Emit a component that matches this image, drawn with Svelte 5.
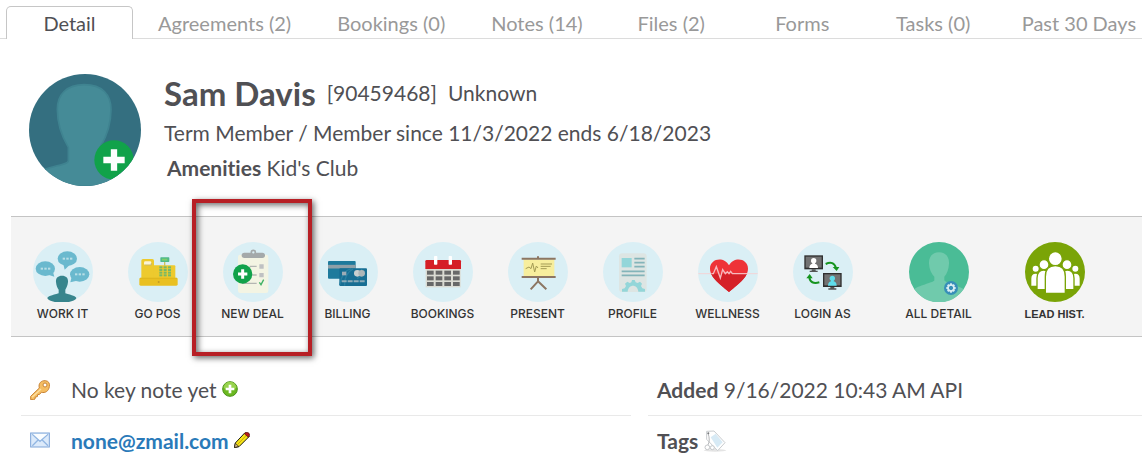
<script lang="ts">
	type Tab = { label: string; count?: number };

	const tabs: Tab[] = [
		{ label: 'Detail' },
		{ label: 'Agreements', count: 2 },
		{ label: 'Bookings', count: 0 },
		{ label: 'Notes', count: 14 },
		{ label: 'Files', count: 2 },
		{ label: 'Forms' },
		{ label: 'Tasks', count: 0 },
		{ label: 'Past 30 Days' }
	];

	let activeTab = $state('Detail');
	const cols = [0, 1, 2, 3];
	const rows = [0, 1, 2];
	const teeth = [0, 45, 90, 135, 180, 225, 270, 315];

	const actions = [
		{ label: 'WORK IT', icon: workIt },
		{ label: 'GO POS', icon: goPos },
		{ label: 'NEW DEAL', icon: newDeal, highlight: true },
		{ label: 'BILLING', icon: billing },
		{ label: 'BOOKINGS', icon: bookings },
		{ label: 'PRESENT', icon: present },
		{ label: 'PROFILE', icon: profile },
		{ label: 'WELLNESS', icon: wellness },
		{ label: 'LOGIN AS', icon: loginAs },
		{ label: 'ALL DETAIL', icon: allDetail, spaced: true, fill: '#4abc96' },
		{ label: 'LEAD HIST.', icon: leadHist, spaced: true, fill: '#7aa407', plain: true }
	];
</script>

{#snippet bubble(x: number, y: number, tail: string)}
	<g fill="#6ab9ce">
		<ellipse cx={x} cy={y} rx="29" ry="22" />
		<path d={tail} />
	</g>
	<g fill="#b9dfe6">
		<rect x={x - 14} y={y - 3} width="7" height="6" />
		<rect x={x - 3} y={y - 3} width="7" height="6" />
		<rect x={x + 8} y={y - 3} width="7" height="6" />
	</g>
{/snippet}

{#snippet workIt()}
	{@render bubble(37, 80, 'M46 98l18 6-5-18z')}
	{@render bubble(103, 50, 'M91 66l4 17 14-13z')}
	{@render bubble(140, 97, 'M116 104l-4 17 20-5z')}
	<path
		fill="#37858d"
		d="M87 101c13 0 19 8 18 19-1 11-5 18-8 23v11c20 5 33 10 33 15-8 17-79 17-87 0 0-5 14-10 34-15v-11c-4-5-7-12-8-23-1-11 5-19 18-19z"
	/>
{/snippet}

{#snippet goPos()}
	<rect x="40" y="51" width="38" height="60" rx="5" fill="#edca2e" />
	<rect x="76" y="70" width="66" height="40" rx="3" fill="#edca2e" />
	<rect x="48" y="58" width="22" height="11" rx="4" fill="#fbf4d4" />
	<path d="M50 69h20v-6" fill="none" stroke="#c9b868" stroke-width="3" />
	<path d="M110 60v12" stroke="#cfc25b" stroke-width="4" />
	<rect x="97" y="46" width="27" height="14" rx="2" fill="#4fb98a" />
	<rect x="102" y="50" width="16" height="6" fill="#7dcf6b" />
	{#each rows as c}
		{#each cols as r}
			<rect x={94 + c * 13} y={73 + r * 8} width="9" height="6" fill="#77b868" />
		{/each}
	{/each}
	<rect x="34" y="107" width="115" height="24" rx="4" fill="#e9c021" />
	<path d="M36 109h111" stroke="#d9b11c" stroke-width="2" />
	<circle cx="92" cy="120" r="3" fill="#c19b24" />
{/snippet}

{#snippet newDeal()}
	<rect x="45" y="38" width="91" height="115" rx="7" fill="#f3f4e3" />
	<rect x="56" y="32" width="70" height="16" rx="8" fill="#a4a9aa" />
	<circle cx="91" cy="31" r="6" fill="#daeff5" stroke="#a4a9aa" stroke-width="5" />
	<path d="M80 73h21M80 99h21M58 124h43" stroke="#b4b6b3" stroke-width="4" />
	<path d="M109 67h13v13h-13zM109 93h13v13h-13z" fill="#bfc1c2" />
	<path d="M109 121l5 7 8-15" fill="none" stroke="#40b265" stroke-width="4" />
	<circle cx="59" cy="96" r="29" fill="#11a24a" />
	<path d="M59 82v28M45 96h28" stroke="#fff" stroke-width="9" />
{/snippet}

{#snippet billing()}
	<rect x="30" y="57" width="83" height="53" rx="3" fill="#1e7a9c" />
	<path d="M30 74h83" stroke="#8fa0a8" stroke-width="11" />
	<rect x="64" y="79" width="83" height="53" rx="3" fill="#176e93" />
	<path d="M65 129c5-28 18-45 34-49M80 131c-2-22 8-42 25-50M117 109c10-2 14-12 14-28" fill="none" stroke="#2981a2" stroke-width="4" />
	<rect x="72" y="89" width="13" height="11" fill="#9cacb6" />
	<circle cx="118" cy="94" r="10" fill="#c9cfcf" />
	<circle cx="131" cy="94" r="10" fill="#adb6b8" />
	<path d="M71 118h70" stroke="#8dabb8" stroke-width="6" stroke-dasharray="15 3" />
{/snippet}

{#snippet bookings()}
	<rect x="38" y="78" width="105" height="58" fill="#dbdbd3" />
	<path d="M37 81V58q0-4 4-4h99q4 0 4 4v23z" fill="#d51f26" />
	<rect x="63" y="42" width="10" height="26" rx="2" fill="#fff" />
	<rect x="107" y="42" width="10" height="26" rx="2" fill="#fff" />
	{#each cols as c}
		{#each rows as r}
			<rect x={42 + c * 26} y={86 + r * 17} width="20" height="12" fill="#686868" />
		{/each}
	{/each}
{/snippet}

{#snippet present()}
	<rect x="47" y="52" width="92" height="50" fill="#f7ee9d" />
	<path d="M41 50h102M41 105h102" stroke="#8c7663" stroke-width="6" />
	<path d="M90 43v6M90 106v14M90 118l-22 24M90 118l25 24" stroke="#8c7663" stroke-width="6" fill="none" />
	<path d="M53 80l10-5 6 5 5-17 6 27 5-18 5 6" fill="none" stroke="#a39b54" stroke-width="3" />
	<path d="M98 66h34M98 73h30M98 80h18" stroke="#a39b54" stroke-width="3" />
{/snippet}

{#snippet profile()}
	<rect x="48" y="34" width="83" height="116" rx="9" fill="#dde5e3" />
	<rect x="56" y="48" width="30" height="28" fill="#93d6d9" />
	<path d="M94 50h31M94 62h31M94 74h31M56 88h69M56 100h69" stroke="#83b4b9" stroke-width="5" />
	<path
		d="M57 149v-8l8-2 4-7-3-7 7-6 7 4 5-2 2-7h8l3 7 6 2 7-4 6 6-3 7 4 7 8 2v8h-20c-2-24-30-24-32 0z"
		fill="#93d6d9"
	/>
{/snippet}

{#snippet wellness()}
	<path d="M1 95h178" stroke="#f4d3d6" stroke-width="3" />
	<path d="M93 150C75 133 36 108 36 80c0-31 42-38 57-10 15-28 57-21 57 10 0 28-39 53-57 70z" fill="#ee3338" />
	<path d="M39 95c10 22 38 40 54 55 16-15 44-33 54-55z" fill="#d52128" />
	<path d="M40 95h6l9-21 12 34 7-25 8 12 6-6 5 6 5-7 5 7h44" fill="none" stroke="#f6b9bd" stroke-width="4" />
{/snippet}

{#snippet monitor(x: number, y: number, fill: string)}
	<rect {x} {y} width="56" height="42" fill="#2f2f2f" />
	<rect x={x + 4} y={y + 4} width="48" height="33" fill="#727272" />
	<path d="M{x + 22} {y + 42}h12v4h6v4h-24v-4h6z" fill="#555" />
	<circle cx={x + 28} cy={y + 16} r="8" {fill} />
	<path d="M{x + 24} {y + 20}h8v5q9 2 9 13h-26q0-11 9-13z" {fill} />
{/snippet}

{#snippet loginAs()}
	{@render monitor(34, 40, '#fff')}
	{@render monitor(90, 93, '#5fdcea')}
	<g fill="none" stroke="#16941f" stroke-width="6">
		<path d="M98 66q24-11 31 12" />
		<path d="M79 121q-27 7-30-15" />
	</g>
	<path d="M119 75h20l-8 12zM40 109h19l-9-13z" fill="#16941f" />
{/snippet}

{#snippet allDetail()}
	<path
		d="M90 31c21 0 31 15 30 34-1 17-6 30-14 39v11c0 6 40 16 58 26a88 88 0 0 1-148 0c18-12 60-20 60-26v-11c-9-9-15-22-16-39-1-19 9-34 30-34z"
		fill="#70caac"
	/>
	<circle cx="126" cy="138" r="21" fill="#378fb8" />
	<g fill="#d8edf2">
		{#each teeth as a}
			<rect x="123" y="124" width="6" height="7" transform="rotate({a} 126 138)" />
		{/each}
	</g>
	<circle cx="126" cy="138" r="9" fill="none" stroke="#d8edf2" stroke-width="5" />
{/snippet}

{#snippet leadHist()}
	<g fill="#fff" stroke="#7aa407" stroke-width="4">
		<circle cx="32" cy="80" r="11" />
		<circle cx="151" cy="80" r="11" />
		<path d="M17 133v-23q0-17 15-17t15 17v23zM136 133v-23q0-17 15-17t15 17v23z" />
		<circle cx="57" cy="68" r="15" />
		<circle cx="126" cy="68" r="15" />
		<path d="M36 143v-34q0-25 20-25t20 25v34zM107 143v-34q0-25 20-25t20 25v34z" />
		<circle cx="91" cy="50" r="21" />
		<path d="M61 154v-50q0-33 30-33t30 33v50z" />
	</g>
{/snippet}

<nav class="tabs">
	{#each tabs as tab}
		<button class="tab" class:active={activeTab === tab.label} onclick={() => (activeTab = tab.label)}>
			{tab.label}{tab.count !== undefined ? ` (${tab.count})` : ''}
		</button>
	{/each}
</nav>

<header class="member">
	<button class="avatar" aria-label="Add photo">
		<svg viewBox="0 0 336 336">
			<clipPath id="avatar-clip"><circle cx="168" cy="168" r="168" /></clipPath>
			<g clip-path="url(#avatar-clip)">
				<rect width="336" height="336" fill="#346f80" />
				<path
					d="M166 32c54 0 80 30 80 74 0 42-12 80-32 113v40c0 14 50 20 90 40v37H20v-36c25-24 98-25 98-40v-40C98 187 85 148 85 106c0-44 27-74 81-74z"
					fill="#458b97"
					stroke="#3f8390"
					stroke-width="5"
				/>
				<circle cx="255" cy="258" r="59" fill="#11a24a" />
				<path d="M255 226v64M223 258h64" stroke="#fff" stroke-width="19" />
			</g>
		</svg>
	</button>
	<div class="summary">
		<div class="name-row">
			<h1>Sam Davis</h1>
			<span>[90459468]</span>
			<span>Unknown</span>
		</div>
		<div>Term Member / Member since 11/3/2022 ends 6/18/2023</div>
		<div class="amenities"><strong>Amenities</strong> Kid's Club</div>
	</div>
</header>

<div class="toolbar">
	{#each actions as action}
		<button class="action" class:spaced={action.spaced} class:plain={action.plain}>
			<svg viewBox="0 0 180 180" aria-hidden="true">
				<circle cx="90" cy="90" r="90" fill={action.fill ?? '#daeff5'} />
				{@render action.icon()}
			</svg>
			<span>{action.label}</span>
			{#if action.highlight}<i class="marker"></i>{/if}
		</button>
	{/each}
</div>

<div class="info">
	<section>
		<div class="row">
			<svg class="lead" viewBox="0 0 60 60" aria-hidden="true">
				<path
					d="M2 49l26-25C24 10 34 1 46 2c10 1 14 8 12 18-2 13-12 20-24 17l-5 6-6 1-1 6-6 1-1 6-4 2H2z"
					fill="#f5bd62"
					stroke="#c98436"
					stroke-width="3"
				/>
				<path d="M6 52l27-25" stroke="#fde0a0" stroke-width="4" />
				<circle cx="45" cy="15" r="6" fill="#fff" stroke="#c98436" stroke-width="3" />
			</svg>
			<span>No key note yet</span>
			<button class="mini" aria-label="Add key note">
				<svg viewBox="0 0 48 48">
					<circle cx="24" cy="24" r="22" fill="#6bb820" stroke="#4a9218" stroke-width="3" />
					<path d="M5 21a19 19 0 0 1 38 0q-19 10-38 0z" fill="#98d34e" />
					<path d="M24 11v26M11 24h26" stroke="#fff" stroke-width="8" />
				</svg>
			</button>
		</div>
		<div class="row">
			<svg class="lead" viewBox="0 0 60 60" aria-hidden="true">
				<rect x="2" y="6" width="56" height="42" fill="#dceafa" stroke="#7ea5d8" stroke-width="3" />
				<path d="M7 44l18-18M54 44L36 26M7 10l23 21 24-21" fill="none" stroke="#92b6e2" stroke-width="4" />
				<path d="M9 9h43L30 28z" fill="#fafdff" />
			</svg>
			<a href="mailto:none@zmail.com">none@zmail.com</a>
			<button class="mini" aria-label="Edit email">
				<svg viewBox="0 0 48 48">
					<path d="M1 47l3-14L33 2l13 11-31 31z" fill="#f7e515" stroke="#1c1a10" stroke-width="3" />
					<path d="M11 37L38 9" stroke="#c9a40c" stroke-width="3" />
					<path d="M31 5l5-4q10-1 11 8l-4 7z" fill="#b8181c" stroke="#4d1010" stroke-width="2" />
					<path d="M1 47l3-13 10 9z" fill="#d8ba83" stroke="#1c1a10" stroke-width="2" />
				</svg>
			</button>
		</div>
	</section>
	<section>
		<div class="row"><span><strong>Added</strong> 9/16/2022 10:43 AM API</span></div>
		<div class="row">
			<strong>Tags</strong>
			<button class="mini tag" aria-label="Edit tags">
				<svg viewBox="0 0 72 66">
					<ellipse cx="36" cy="61" rx="34" ry="4" fill="#e4e4e4" />
					<path d="M11 4l22-1 33 35-22 24-33-34z" fill="#fff" stroke="#c9cccf" stroke-width="3" />
					<path d="M23 22l15-11 21 26-16 16z" fill="#d7eaf5" />
					<path d="M15 9q8 24-1 37" fill="none" stroke="#b5b7ba" stroke-width="3" />
					<circle cx="16" cy="10" r="3" fill="#77797b" />
					<circle cx="13" cy="52" r="7" fill="#fff" stroke="#c4c7ca" stroke-width="3" />
					<circle cx="28" cy="53" r="6" fill="#fff" stroke="#c4c7ca" stroke-width="3" />
				</svg>
			</button>
		</div>
	</section>
</div>

<style>
	:global(body) {
		background: #fff;
		color: #505054;
		font-family: Lato, sans-serif;
		font-size: 21px;
		line-height: 32px;
		font-variant-ligatures: none;
		overflow-x: hidden;
	}

	button {
		margin: 0;
		padding: 0;
		border: 0;
		background: none;
		font: inherit;
		color: inherit;
		cursor: pointer;
	}

	svg {
		display: block;
	}

	.tabs {
		display: flex;
		gap: 4px;
		padding: 6px 0 0 6px;
		box-shadow: inset 0 -1px #dcdcdc;
		white-space: nowrap;
	}

	.tab {
		flex: none;
		min-width: 127px;
		height: 33px;
		padding: 0 20px;
		border: 1px solid transparent;
		border-bottom: 0;
		color: #999;
		font-size: 20px;
	}

	.tab.active {
		border-color: #c6c6c6;
		border-radius: 5px 5px 0 0;
		background: #fff;
		color: #505054;
	}

	.member {
		display: flex;
		gap: 23px;
		padding: 34px 0 30px 29px;
	}

	.avatar {
		flex: none;
		width: 112px;
		height: 113px;
	}

	.name-row {
		display: flex;
		align-items: center;
		gap: 11px;
		height: 40px;
	}

	h1 {
		margin: 0;
		font-size: 33px;
		line-height: 44px;
	}

	.summary {
		line-height: 40px;
	}

	.amenities {
		padding-left: 3px;
		line-height: 30px;
	}

	.toolbar {
		display: flex;
		margin-left: 11px;
		padding: 25px 0 12px 4px;
		border: solid #c4c4c4;
		border-width: 1px 0;
		background: #f4f4f4;
	}

	.action {
		position: relative;
		flex: none;
		width: 95px;
		color: #333;
		font: 500 12px/20px Inter, sans-serif;
	}

	.action > svg {
		width: 60px;
		height: 60px;
		margin: 0 auto 2px;
	}

	.action.spaced {
		margin-left: 21px;
	}

	.action.plain {
		font: 700 11px/20px 'Liberation Sans', Arial, sans-serif;
	}

	/* callout frame around the current step */
	.marker {
		position: absolute;
		inset: -43px -12px -32px -13px;
		border: 4px solid #b71f25;
		box-shadow:
			2px 2px 6px rgba(0, 0, 0, 0.6),
			inset 2px 2px 6px rgba(0, 0, 0, 0.6);
		pointer-events: none;
	}

	.info {
		display: grid;
		grid-template-columns: 610px 1fr;
		gap: 17px;
		padding: 28px 0 0 21px;
	}

	.row {
		display: flex;
		align-items: center;
		height: 50px;
		border-bottom: 1px solid #e9e9e9;
	}

	.row:last-child {
		border-bottom: 0;
	}

	section:last-child .row {
		padding-left: 9px;
	}

	.lead {
		width: 20px;
		height: 20px;
		margin: 0 21px 0 9px;
	}

	.mini {
		width: 16px;
		height: 16px;
		margin: 0 0 3px 5px;
	}

	.mini.tag {
		width: 24px;
		height: 22px;
		margin-bottom: 0;
	}

	a {
		color: #2a7ab9;
		font-weight: 700;
		text-decoration: none;
	}
</style>
